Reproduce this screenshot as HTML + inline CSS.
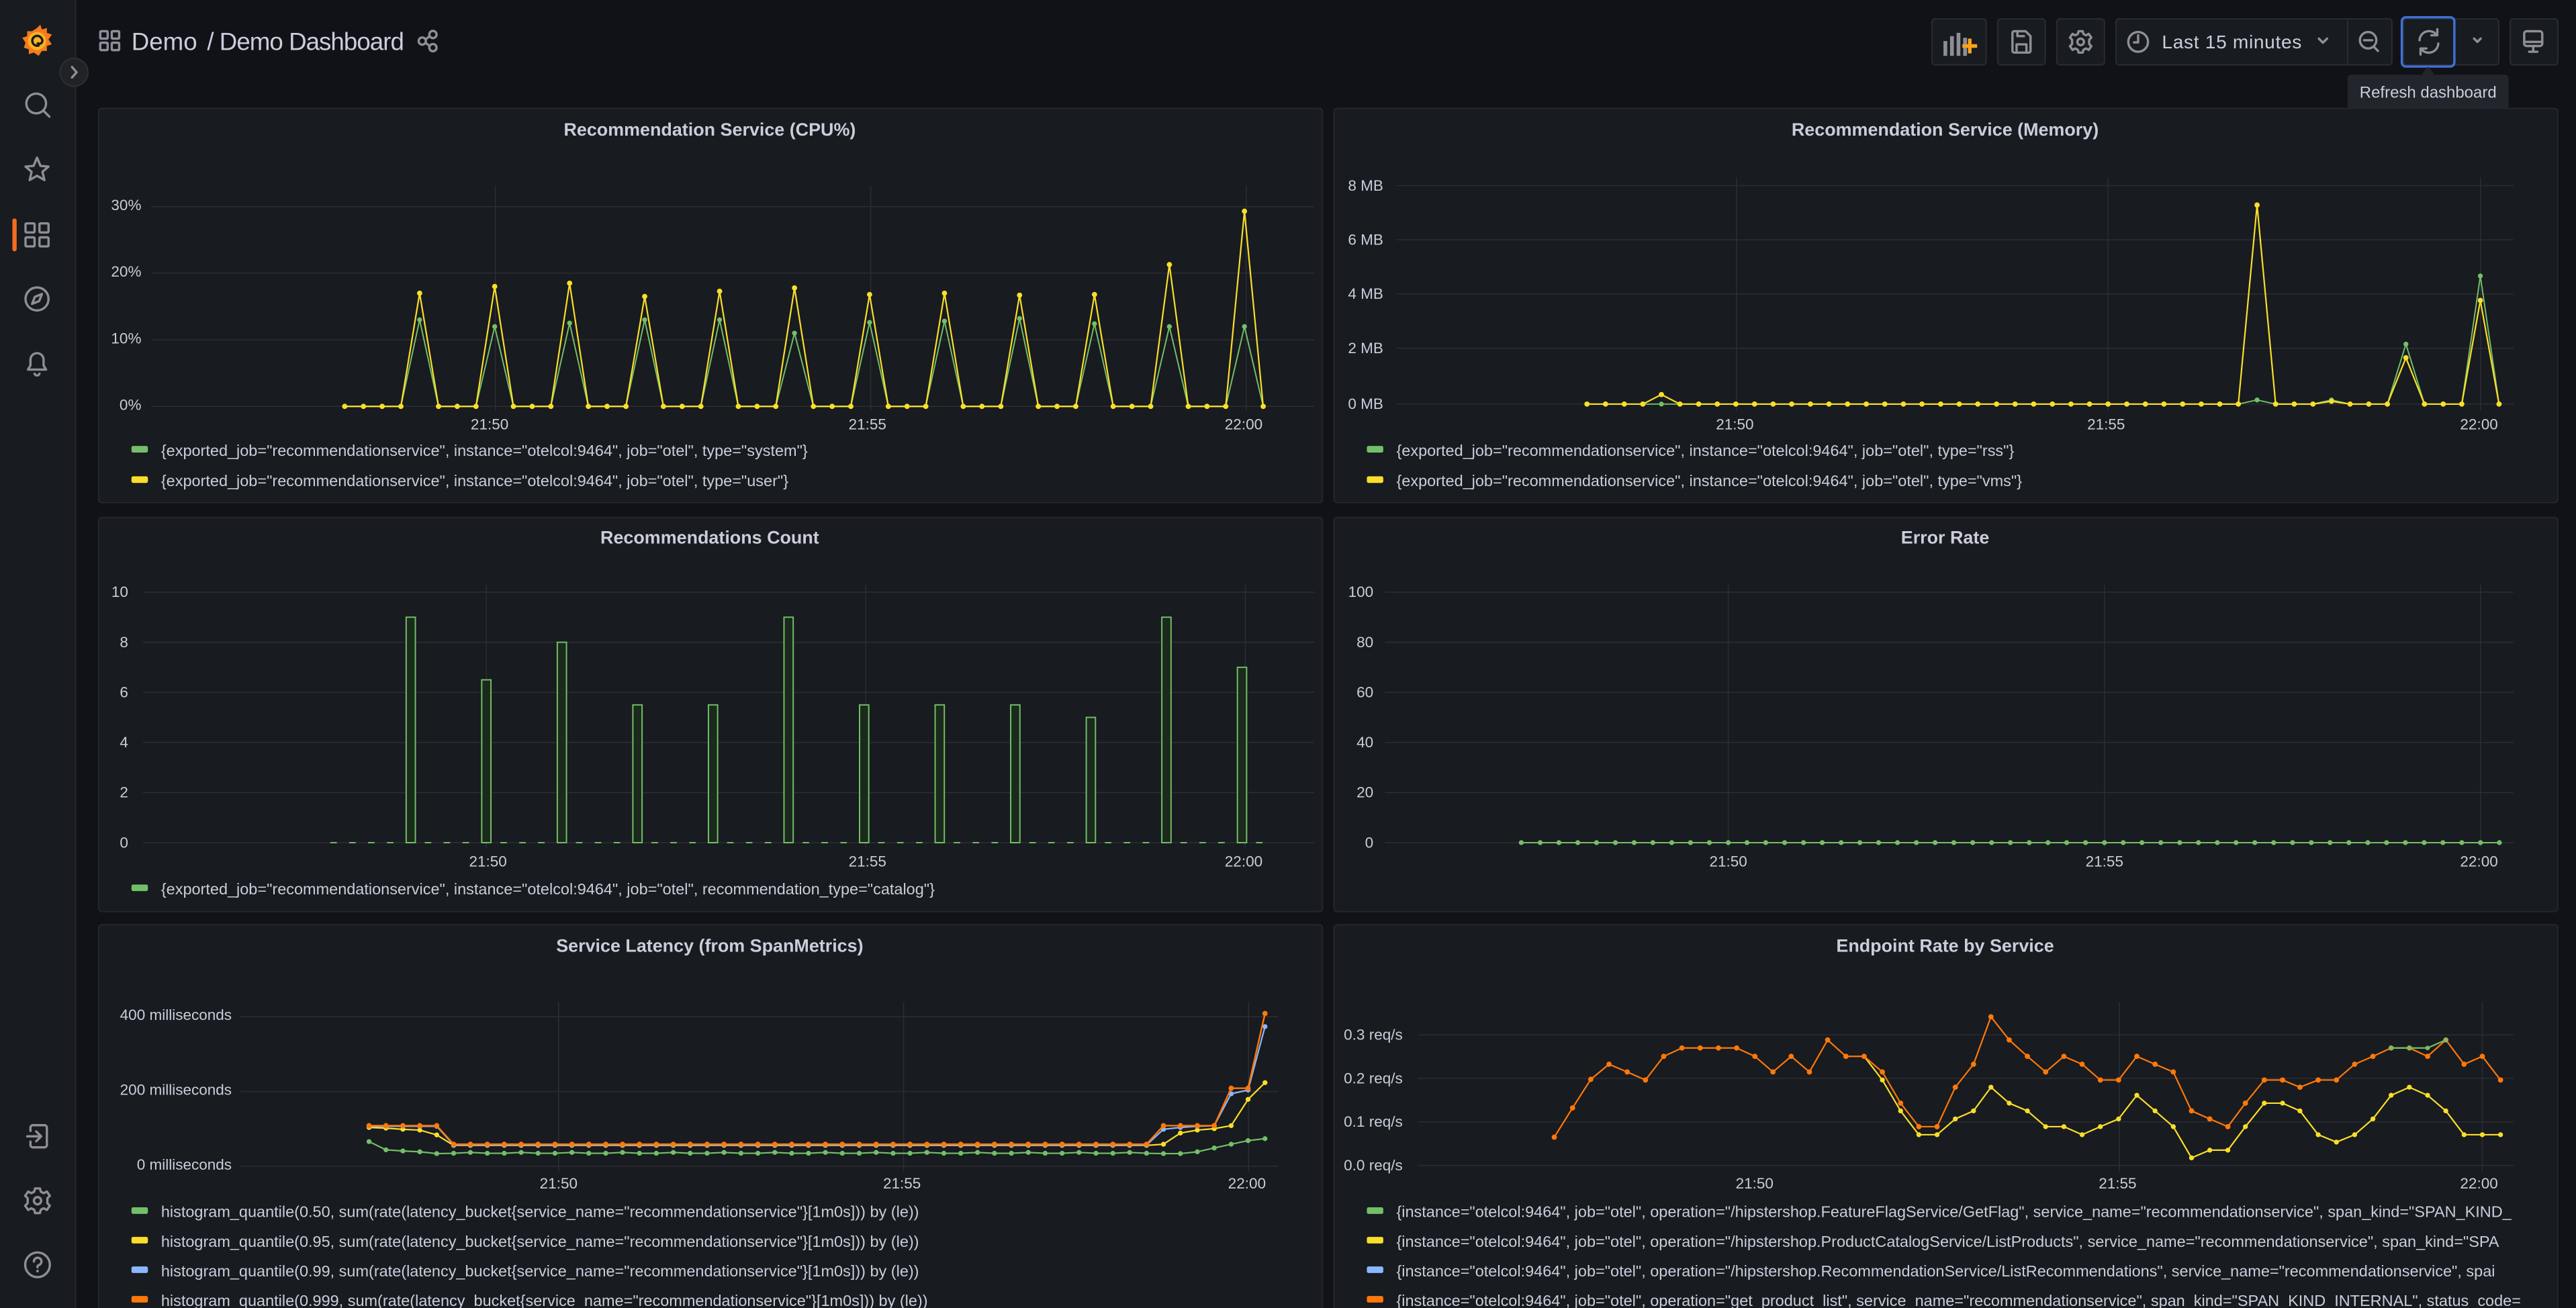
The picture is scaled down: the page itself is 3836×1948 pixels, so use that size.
<!DOCTYPE html>
<html><head><meta charset="utf-8">
<style>
html,body{margin:0;padding:0;background:#111217;width:3836px;height:1948px;overflow:hidden}
svg{display:block}
text{font-family:"Liberation Sans",sans-serif;fill:#ccccdc}
.t{font-size:11px;font-weight:bold;text-anchor:middle}
.ax{font-size:9.2px;fill:#ccccdc}
.r{text-anchor:end}
.m{text-anchor:middle}
.lg{font-size:9.6px}
.ic{fill:none;stroke:#8e8e99;stroke-width:1.4;stroke-linecap:round;stroke-linejoin:round}
.grid{stroke:#2c2e34;stroke-width:0.6}
</style></head><body>
<svg id="s" width="3836" height="1948" viewBox="0 0 1568 796.3" xmlns="http://www.w3.org/2000/svg">
<defs>
<clipPath id="c5"><rect x="60" y="563" width="745" height="240"/></clipPath>
<clipPath id="c6"><rect x="812" y="563" width="738" height="240"/></clipPath>
</defs>
<rect width="1568" height="796.3" fill="#111217"/>
<!-- sidebar -->
<rect x="0" y="0" width="46" height="796.3" fill="#181b1f"/>
<line x1="46" y1="0" x2="46" y2="796.3" stroke="#25272d" stroke-width="0.8"/>
<g transform="translate(22.5,25)">
<path d="M0,-8 L2,-10 L3,-7 L6,-8 L6,-5 L9,-4 L7,-1 L9,2 L6,3 L6,6 L3,6 L1,9 L-2,7 L-5,8 L-5,5 L-8,4 L-7,1 L-9,-2 L-6,-3 L-6,-6 L-3,-6 Z" fill="#f47b20"/>
<circle r="5.5" fill="#fbb21f"/>
<path d="M1.5,2.5 A3,3 0 1 1 2.8,-1.5 A1.8,1.8 0 1 1 0,1" fill="none" stroke="#181b1f" stroke-width="1.4"/>
</g>
<circle cx="45" cy="44" r="8.5" fill="#202226" stroke="#2e3036" stroke-width="0.8"/>
<path d="M43.8,40.8 L46.6,44 L43.8,47.2" class="ic" stroke="#ccccdc"/>
<circle cx="22" cy="63" r="6" class="ic"/><path d="M26.5,67.5 L30,71" class="ic"/>
<path d="M22.5,96 L24.6,101 L29.5,101.4 L25.8,104.6 L27,109.6 L22.5,107 L18,109.6 L19.2,104.6 L15.5,101.4 L20.4,101 Z" class="ic"/>
<rect x="7.5" y="133" width="2.6" height="20" rx="1.3" fill="#f46c1f"/>
<g class="ic" stroke="#ccccdc"><rect x="15.5" y="136" width="5.5" height="5.5" rx="0.6"/><rect x="24" y="136" width="5.5" height="5.5" rx="0.6"/><rect x="15.5" y="144.5" width="5.5" height="5.5" rx="0.6"/><rect x="24" y="144.5" width="5.5" height="5.5" rx="0.6"/></g>
<circle cx="22.5" cy="182" r="7" class="ic"/><path d="M25.5,179 L23.8,183.3 L19.5,185 L21.2,180.7 Z" class="ic"/>
<path d="M17,225 L28,225 L26.5,222.5 L26.5,219 A4,4 0 0 0 18.5,219 L18.5,222.5 Z M21,227.5 A1.6,1.6 0 0 0 24,227.5" class="ic"/>
<path d="M20,685 L27,685 A1.5,1.5 0 0 1 28.5,686.5 L28.5,697 A1.5,1.5 0 0 1 27,698.5 L20,698.5 A1.5,1.5 0 0 1 18.5,697 L18.5,695 M18.5,688.5 L18.5,686.5 A1.5,1.5 0 0 1 20,685 M16.5,691.8 L25,691.8 M22,688.8 L25,691.8 L22,694.8" class="ic"/>
<circle cx="22.8" cy="731" r="2.2" class="ic"/>
<path d="M21.3,723.5 L24.3,723.5 L24.8,725.5 L26.6,726.4 L28.5,725.4 L30.3,728 L28.8,729.5 L28.8,732.5 L30.3,734 L28.5,736.6 L26.6,735.6 L24.8,736.5 L24.3,738.5 L21.3,738.5 L20.8,736.5 L19,735.6 L17.1,736.6 L15.3,734 L16.8,732.5 L16.8,729.5 L15.3,728 L17.1,725.4 L19,726.4 L20.8,725.5 Z" class="ic"/>
<circle cx="22.8" cy="770" r="7.5" class="ic"/>
<path d="M20.6,768 A2.3,2.3 0 1 1 23.5,770.2 L22.8,770.7 L22.8,771.5" class="ic"/><circle cx="22.8" cy="773.8" r="0.8" fill="#8e8e99"/>

<!-- header -->
<g class="ic" stroke="#ccccdc" stroke-width="1.2"><rect x="61" y="19" width="4.5" height="4.5" rx="0.5"/><rect x="68" y="19" width="4.5" height="4.5" rx="0.5"/><rect x="61" y="26" width="4.5" height="4.5" rx="0.5"/><rect x="68" y="26" width="4.5" height="4.5" rx="0.5"/></g>
<text x="80" y="30.5" style="font-size:15px" textLength="40">Demo</text>
<text x="126" y="30.5" style="font-size:15px" textLength="120">/ Demo Dashboard</text>
<g class="ic" stroke="#ccccdc" stroke-width="1.1"><circle cx="257" cy="25" r="2.2"/><circle cx="263.5" cy="21" r="2.2"/><circle cx="263.5" cy="29" r="2.2"/><path d="M259,24 L261.5,22 M259,26 L261.5,28"/></g>

<!-- toolbar -->
<g fill="#181b1f" stroke="#2a2c32" stroke-width="0.8">
<rect x="1176" y="11.5" width="33" height="28" rx="2"/>
<rect x="1216" y="11.5" width="29" height="28" rx="2"/>
<rect x="1252" y="11.5" width="29" height="28" rx="2"/>
<rect x="1288" y="11.5" width="168" height="28" rx="2"/>
<rect x="1463" y="11.5" width="58" height="28" rx="2"/>
<rect x="1528" y="11.5" width="29" height="28" rx="2"/>
</g>
<line x1="1429" y1="12" x2="1429" y2="39" stroke="#2a2c32" stroke-width="0.8"/>
<rect x="1462" y="10.5" width="32" height="30" rx="2.5" fill="none" stroke="#3d71d9" stroke-width="1.4"/>
<g fill="#8e8e99"><rect x="1183" y="25" width="2.3" height="9"/><rect x="1187" y="22" width="2.3" height="12"/><rect x="1191" y="20" width="2.3" height="14"/><rect x="1195" y="23" width="2.3" height="11"/></g>
<path d="M1199,23.5 L1199,32.5 M1194.5,28 L1203.5,28" stroke="#f8a31c" stroke-width="2.2"/>
<path d="M1226,19 L1233,19 L1236,22 L1236,31 A1,1 0 0 1 1235,32 L1226,32 A1,1 0 0 1 1225,31 L1225,20 A1,1 0 0 1 1226,19 Z M1227.5,32 L1227.5,27 L1233.5,27 L1233.5,32 M1228,19 L1228,22 L1232,22" class="ic"/>
<circle cx="1266.5" cy="25.5" r="2" class="ic"/>
<path d="M1265.2,19 L1267.8,19 L1268.2,20.7 L1269.8,21.5 L1271.4,20.6 L1273,22.9 L1271.7,24.2 L1271.7,26.8 L1273,28.1 L1271.4,30.4 L1269.8,29.5 L1268.2,30.3 L1267.8,32 L1265.2,32 L1264.8,30.3 L1263.2,29.5 L1261.6,30.4 L1260,28.1 L1261.3,26.8 L1261.3,24.2 L1260,22.9 L1261.6,20.6 L1263.2,21.5 L1264.8,20.7 Z" class="ic"/>
<circle cx="1301.5" cy="25.5" r="6" class="ic"/><path d="M1301.5,21.5 L1301.5,25.8 L1299,25.8" class="ic"/>
<text x="1316" y="29.5" style="font-size:11.5px;fill:#ccccdc" textLength="85">Last 15 minutes</text>
<path d="M1411.5,23.5 L1414,26 L1416.5,23.5" class="ic"/>
<circle cx="1441.5" cy="24.5" r="5" class="ic"/><path d="M1439,24.5 L1444,24.5 M1445,28.5 L1447.5,31" class="ic"/>
<!-- refresh -->
<path d="M1472.8,24.5 A5.8,5.8 0 0 1 1483.2,21.2 M1483.6,17.8 L1483.6,21.5 L1480,21.5 M1484.2,26.5 A5.8,5.8 0 0 1 1473.8,29.8 M1473.4,33.2 L1473.4,29.5 L1477,29.5" class="ic"/>
<path d="M1506,23.5 L1508,25.5 L1510,23.5" class="ic"/>
<rect x="1536.5" y="19" width="11" height="9" rx="1.5" class="ic"/><path d="M1536.5,25.5 L1547.5,25.5 M1542,28 L1542,31.5 M1539.5,31.5 L1544.5,31.5" class="ic"/>
<path d="M1474,45.5 L1478,40.5 L1482,45.5 Z" fill="#22252b"/>
<rect x="1429" y="45.5" width="98" height="21.5" rx="2" fill="#22252b"/>
<text x="1478" y="59.5" class="m" style="font-size:9.8px">Refresh dashboard</text>

<!-- panels -->
<g fill="#181b1f" stroke="#25272d" stroke-width="0.8">
<rect x="60" y="66" width="745" height="240" rx="2"/>
<rect x="812" y="66" width="745" height="240" rx="2"/>
<rect x="60" y="315" width="745" height="240" rx="2"/>
<rect x="812" y="315" width="745" height="240" rx="2"/>
<rect x="60" y="563" width="745" height="245" rx="2"/>
<rect x="812" y="563" width="745" height="245" rx="2"/>
</g>
<text x="432" y="82.5" class="t">Recommendation Service (CPU%)</text>
<text x="1184" y="82.5" class="t">Recommendation Service (Memory)</text>
<text x="432" y="331" class="t">Recommendations Count</text>
<text x="1184" y="331" class="t">Error Rate</text>
<text x="432" y="579.5" class="t">Service Latency (from SpanMetrics)</text>
<text x="1184" y="579.5" class="t">Endpoint Rate by Service</text>

<g class="grid">
<line x1="92" y1="125.8" x2="800" y2="125.8"/><line x1="92" y1="166.3" x2="800" y2="166.3"/><line x1="92" y1="206.9" x2="800" y2="206.9"/><line x1="92" y1="247.4" x2="800" y2="247.4"/>
<line x1="301.5" y1="113" x2="301.5" y2="250"/><line x1="530" y1="113" x2="530" y2="250"/><line x1="758.5" y1="113" x2="758.5" y2="250"/>
<line x1="850" y1="113" x2="1530" y2="113"/><line x1="850" y1="146" x2="1530" y2="146"/><line x1="850" y1="179" x2="1530" y2="179"/><line x1="850" y1="212" x2="1530" y2="212"/><line x1="850" y1="246" x2="1530" y2="246"/>
<line x1="1057" y1="108" x2="1057" y2="250"/><line x1="1283" y1="108" x2="1283" y2="250"/><line x1="1510" y1="108" x2="1510" y2="250"/>
<line x1="87" y1="360.5" x2="800" y2="360.5"/><line x1="87" y1="391" x2="800" y2="391"/><line x1="87" y1="421.5" x2="800" y2="421.5"/><line x1="87" y1="452" x2="800" y2="452"/><line x1="87" y1="482.5" x2="800" y2="482.5"/><line x1="87" y1="513" x2="800" y2="513"/>
<line x1="296" y1="356" x2="296" y2="516"/><line x1="527" y1="356" x2="527" y2="516"/><line x1="758" y1="356" x2="758" y2="516"/>
<line x1="843" y1="360.5" x2="1530" y2="360.5"/><line x1="843" y1="391" x2="1530" y2="391"/><line x1="843" y1="421.5" x2="1530" y2="421.5"/><line x1="843" y1="452" x2="1530" y2="452"/><line x1="843" y1="482.5" x2="1530" y2="482.5"/><line x1="843" y1="513" x2="1530" y2="513"/>
<line x1="1052" y1="356" x2="1052" y2="516"/><line x1="1281" y1="356" x2="1281" y2="516"/><line x1="1510" y1="356" x2="1510" y2="516"/>
<line x1="146" y1="619" x2="778" y2="619"/><line x1="146" y1="664.5" x2="778" y2="664.5"/><line x1="146" y1="710" x2="778" y2="710"/>
<line x1="340" y1="610" x2="340" y2="713"/><line x1="550" y1="610" x2="550" y2="713"/><line x1="760" y1="610" x2="760" y2="713"/>
<line x1="863" y1="630" x2="1530" y2="630"/><line x1="863" y1="656.5" x2="1530" y2="656.5"/><line x1="863" y1="683" x2="1530" y2="683"/><line x1="863" y1="709.5" x2="1530" y2="709.5"/>
<line x1="1290" y1="610" x2="1290" y2="713"/><line x1="1511" y1="610" x2="1511" y2="713"/>
</g>
<g class="ax">
<text x="86" y="128" class="r">30%</text><text x="86" y="168.5" class="r">20%</text><text x="86" y="209" class="r">10%</text><text x="86" y="249.5" class="r">0%</text>
<text x="298" y="261.5" class="m">21:50</text><text x="528" y="261.5" class="m">21:55</text><text x="757" y="261.5" class="m">22:00</text>
<text x="842" y="116" class="r">8 MB</text><text x="842" y="149" class="r">6 MB</text><text x="842" y="182" class="r">4 MB</text><text x="842" y="215" class="r">2 MB</text><text x="842" y="249" class="r">0 MB</text>
<text x="1056" y="261.5" class="m">21:50</text><text x="1282" y="261.5" class="m">21:55</text><text x="1509" y="261.5" class="m">22:00</text>
<text x="78" y="363.5" class="r">10</text><text x="78" y="394" class="r">8</text><text x="78" y="424.5" class="r">6</text><text x="78" y="455" class="r">4</text><text x="78" y="485.5" class="r">2</text><text x="78" y="516" class="r">0</text>
<text x="297" y="527.5" class="m">21:50</text><text x="528" y="527.5" class="m">21:55</text><text x="757" y="527.5" class="m">22:00</text>
<text x="836" y="363.5" class="r">100</text><text x="836" y="394" class="r">80</text><text x="836" y="424.5" class="r">60</text><text x="836" y="455" class="r">40</text><text x="836" y="485.5" class="r">20</text><text x="836" y="516" class="r">0</text>
<text x="1052" y="527.5" class="m">21:50</text><text x="1281" y="527.5" class="m">21:55</text><text x="1509" y="527.5" class="m">22:00</text>
<g clip-path="url(#c5)"><text x="141" y="621" class="r">400 milliseconds</text><text x="141" y="666.5" class="r">200 milliseconds</text><text x="141" y="712" class="r">0 milliseconds</text></g>
<text x="340" y="723.5" class="m">21:50</text><text x="549" y="723.5" class="m">21:55</text><text x="759" y="723.5" class="m">22:00</text>
<text x="818" y="633" >0.3 req/s</text><text x="818" y="659.5">0.2 req/s</text><text x="818" y="686">0.1 req/s</text><text x="818" y="712.5">0.0 req/s</text>
<text x="1068" y="723.5" class="m">21:50</text><text x="1289" y="723.5" class="m">21:55</text><text x="1509" y="723.5" class="m">22:00</text>
</g>

<g id="charts"></g>

<g class="lg">
<rect x="80" y="271.5" width="10" height="4" rx="1" fill="#73bf69"/><text x="98" y="277.5">{exported_job="recommendationservice", instance="otelcol:9464", job="otel", type="system"}</text>
<rect x="80" y="290" width="10" height="4" rx="1" fill="#fade2a"/><text x="98" y="296">{exported_job="recommendationservice", instance="otelcol:9464", job="otel", type="user"}</text>
<rect x="832" y="271.5" width="10" height="4" rx="1" fill="#73bf69"/><text x="850" y="277.5">{exported_job="recommendationservice", instance="otelcol:9464", job="otel", type="rss"}</text>
<rect x="832" y="290" width="10" height="4" rx="1" fill="#fade2a"/><text x="850" y="296">{exported_job="recommendationservice", instance="otelcol:9464", job="otel", type="vms"}</text>
<rect x="80" y="538.5" width="10" height="4" rx="1" fill="#73bf69"/><text x="98" y="544.5">{exported_job="recommendationservice", instance="otelcol:9464", job="otel", recommendation_type="catalog"}</text>
<g clip-path="url(#c6)">
<rect x="832" y="538.5" width="10" height="4" rx="1" fill="#73bf69"/><text x="850" y="544.5">{instance="otelcol:9464", job="otel", operation="HTTP GET", service_name="loadgenerator", span_kind="SPAN_KIND_CLIENT", status_code="STATUS_CODE_EI</text>
<rect x="832" y="735" width="10" height="4" rx="1" fill="#73bf69"/><text x="850" y="741">{instance="otelcol:9464", job="otel", operation="/hipstershop.FeatureFlagService/GetFlag", service_name="recommendationservice", span_kind="SPAN_KIND_</text>
<rect x="832" y="753" width="10" height="4" rx="1" fill="#fade2a"/><text x="850" y="759">{instance="otelcol:9464", job="otel", operation="/hipstershop.ProductCatalogService/ListProducts", service_name="recommendationservice", span_kind="SPA</text>
<rect x="832" y="771" width="10" height="4" rx="1" fill="#8ab8ff"/><text x="850" y="777">{instance="otelcol:9464", job="otel", operation="/hipstershop.RecommendationService/ListRecommendations", service_name="recommendationservice", spai</text>
<rect x="832" y="789" width="10" height="4" rx="1" fill="#ff780a"/><text x="850" y="795">{instance="otelcol:9464", job="otel", operation="get_product_list", service_name="recommendationservice", span_kind="SPAN_KIND_INTERNAL", status_code=</text>
</g>
<rect x="80" y="735" width="10" height="4" rx="1" fill="#73bf69"/><text x="98" y="741">histogram_quantile(0.50, sum(rate(latency_bucket{service_name="recommendationservice"}[1m0s])) by (le))</text>
<rect x="80" y="753" width="10" height="4" rx="1" fill="#fade2a"/><text x="98" y="759">histogram_quantile(0.95, sum(rate(latency_bucket{service_name="recommendationservice"}[1m0s])) by (le))</text>
<rect x="80" y="771" width="10" height="4" rx="1" fill="#8ab8ff"/><text x="98" y="777">histogram_quantile(0.99, sum(rate(latency_bucket{service_name="recommendationservice"}[1m0s])) by (le))</text>
<rect x="80" y="789" width="10" height="4" rx="1" fill="#ff780a"/><text x="98" y="795">histogram_quantile(0.999, sum(rate(latency_bucket{service_name="recommendationservice"}[1m0s])) by (le))</text>
</g>
</svg>
<script>
(function(){
var g=document.getElementById("charts"),out="";
var G="#73bf69",Y="#fade2a",B="#8ab8ff",O="#ff780a";
function series(pts,c,r,w){var s=pts.map(function(p){return p[0].toFixed(1)+","+p[1].toFixed(1)}).join(" ");
out+='<polyline points="'+s+'" fill="none" stroke="'+c+'" stroke-width="'+(w||1)+'" stroke-linejoin="round"/>';
if(r)pts.forEach(function(p){out+='<circle cx="'+p[0].toFixed(1)+'" cy="'+p[1].toFixed(1)+'" r="'+r+'" fill="'+c+'"/>'});}
var yp=[17,18,18.5,16.5,17.3,17.8,16.8,17,16.7,16.8,21.3,29.3],gp=[13,12,12.5,13,13,11,12.6,12.8,13.2,12.4,12,12];
var cy=[],cg=[];for(var i=0;i<50;i++){var x=209.8+i*11.41,vy=0,vg=0;if(i>=4&&i<=48&&(i-4)%4==0){var k=(i-4)/4;vy=yp[k];vg=gp[k];}
cy.push([x,247.4-vy*4.053]);cg.push([x,247.4-vg*4.053]);}
series(cg,G,1.5,0.8);series(cy,Y,1.6,0.9);
var my=[],mg=[];for(i=0;i<50;i++){var x2=966+i*11.33,a=0,b=0;
if(i==4)a=0.35;if(i==36){a=7.3;b=0.15;}if(i==40){a=0.1;b=0.15;}if(i==44){a=1.7;b=2.2;}if(i==48){a=3.8;b=4.7;}
my.push([x2,246-a*16.6]);mg.push([x2,246-b*16.6]);}
series(mg,G,1.5,0.8);series(my,Y,1.6,0.9);
var bx=[250,296,342,388,434,480,526,572,618,664,710,756],bv=[9,6.5,8,5.5,5.5,9,5.5,5.5,5.5,5,9,7];
for(i=0;i<50;i++){out+='<line x1="'+(201+i*11.5)+'" y1="513" x2="'+(205+i*11.5)+'" y2="513" stroke="'+G+'" stroke-width="0.8"/>';}
bx.forEach(function(x,j){var h=bv[j]*15.25;out+='<rect x="'+(x-2.8)+'" y="'+(513-h)+'" width="5.6" height="'+h+'" fill="#1b2a1c" stroke="'+G+'" stroke-width="0.8"/>';});
var er=[];for(i=0;i<53;i++)er.push([926+i*11.45,513]);series(er,G,1.5,0.8);
var n=54,lo=[],lb=[],ly=[],lgn=[];
var yf=[95,93,90,88,75],gf=[57,35,32,30,25];
for(i=0;i<n;i++){var x5=224.6+i*10.29,o,bb,yy,gg;
if(i<5){o=100;bb=98;yy=yf[i];gg=gf[i];}else if(i<47){o=50;bb=48;yy=47;gg=25+((i%3)?1:3);}
else{var t=i-47;o=[100,100,100,100,200,200,400][t];bb=[90,95,98,100,185,195,365][t];yy=[50,80,88,92,100,170,215][t];gg=[25,25,30,40,50,60,65][t];}
lo.push([x5,708-o*0.2275]);lb.push([x5,708-bb*0.2275]);ly.push([x5,708-yy*0.2275]);lgn.push([x5,708-gg*0.2275]);}
series(lgn,G,1.5,0.9);series(ly,Y,1.5,0.9);series(lb,B,1.5,0.9);series(lo,O,1.6,1);
function m6(a){return a.map(function(p){return [812+p[0]*0.4824,564.2+p[1]*0.1481]});}
var oz=[[278,865],[301,745],[324,627],[347,565],[370,597],[393,630],[416,533],[439,498],[462,498],[485,498],[508,498],[531,533],[554,597],[577,533],[600,597],[623,465],[646,533],[669,533],[692,597],[715,725],[738,822],[761,822],[784,660],[807,565],[829,370],[852,465],[875,533],[898,597],[921,533],[944,565],[967,630],[990,630],[1013,533],[1036,565],[1059,597],[1082,757],[1105,790],[1128,822],[1150,725],[1174,630],[1197,630],[1219,660],[1242,630],[1265,630],[1288,565],[1311,533],[1334,498],[1357,498],[1380,533],[1403,465],[1426,565],[1449,533],[1472,630]];
var yz=[[669,533],[692,630],[715,757],[738,855],[761,855],[784,790],[807,757],[829,660],[852,725],[875,757],[898,822],[921,822],[944,855],[967,822],[990,790],[1013,693],[1036,757],[1059,822],[1082,950],[1105,918],[1128,918],[1150,822],[1174,725],[1197,725],[1219,757],[1242,855],[1265,885],[1288,855],[1311,790],[1334,693],[1357,660],[1380,693],[1403,757],[1426,855],[1449,855],[1472,855]];
series(m6(yz),Y,1.5,0.9);series(m6(oz),O,1.6,0.9);series(m6([[1334,498],[1357,498],[1380,498],[1403,465]]),G,1.4,0.9);
g.innerHTML=out;
})();
</script>
</body></html>
